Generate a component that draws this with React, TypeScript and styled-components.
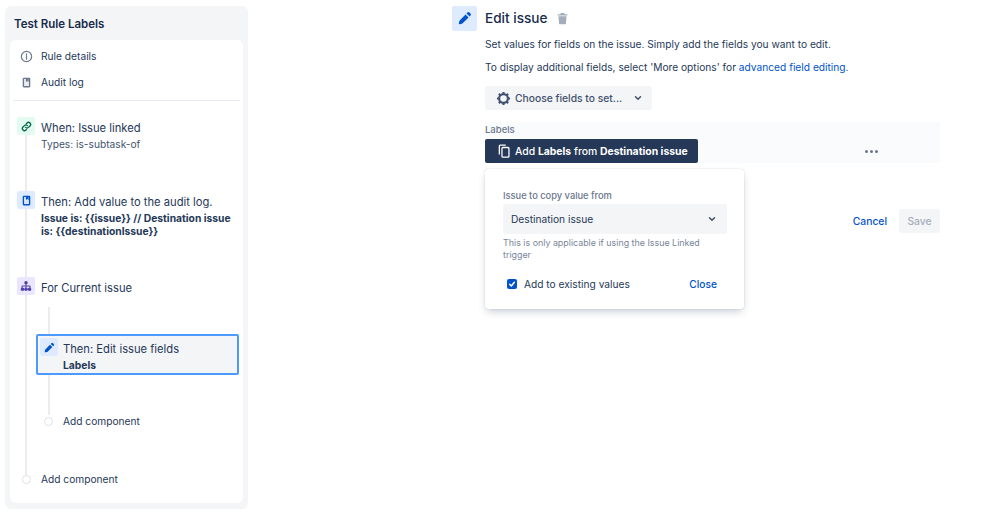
import React from "react";
import styled, { createGlobalStyle } from "styled-components";

const Global = createGlobalStyle`
  html, body { margin: 0; padding: 0; background: #fff; }
  body { font-family: Inter, "Liberation Sans", sans-serif; color: #172b4d; -webkit-font-smoothing: antialiased; }
  * { box-sizing: border-box; }
`;

const Page = styled.div`
  width: 999px;
  height: 518px;
  display: flex;
  overflow: hidden;
`;
const Sidebar = styled.aside`
  width: 243px;
  height: 503px;
  margin: 6px 0 0 5px;
  padding: 0 5px 6px;
  background: #f4f5f7;
  border-radius: 6px;
  display: flex;
  flex-direction: column;
`;
const RuleTitle = styled.h2`
  margin: 0;
  height: 34px;
  padding: 2px 0 0 4px;
  display: flex;
  align-items: center;
  font-size: 11.5px;
  font-weight: 600;
`;
const Card = styled.div`
  flex: 1;
  background: #fff;
  border-radius: 6px;
  padding: 3px 3px 0;
`;
const NavRow = styled.div`
  height: 26px;
  display: flex;
  align-items: center;
  gap: 8px;
  padding-left: 7px;
  font-size: 10.2px;
  color: #253858;
`;
const NavIcon = styled.svg`
  width: 13px;
  height: 13px;
  color: #6b778c;
  flex: none;
`;
const Divider = styled.hr`
  margin: 5px 0 0;
  border: 0;
  border-top: 1px solid #e8e9f0;
`;
const Timeline = styled.div`
  position: relative;
  margin-top: 16px;
  padding-left: 4px;
  &::before {
    content: "";
    position: absolute;
    left: 12px;
    top: 16px;
    height: 342px;
    width: 2px;
    background: #ebecf0;
  }
`;
const Step = styled.div<{ $h: number }>`
  position: relative;
  display: flex;
  gap: 6px;
  min-height: ${(p) => p.$h}px;
`;
const IconBox = styled.div<{ $bg: string; $fg: string; $size?: number }>`
  width: ${(p) => p.$size ?? 18}px;
  height: ${(p) => p.$size ?? 18}px;
  flex: none;
  border-radius: 2px;
  background: ${(p) => p.$bg};
  color: ${(p) => p.$fg};
  display: flex;
  align-items: center;
  justify-content: center;
`;
const StepBody = styled.div`
  min-width: 0;
`;
const StepTitle = styled.div`
  margin-top: 2px;
  height: 18px;
  line-height: 18px;
  font-size: 11.2px;
  color: #253858;
  white-space: nowrap;
`;
const StepSub = styled.div`
  margin-top: 1px;
  font-size: 10.2px;
  line-height: 13px;
  color: #42526e;
`;
const StepBold = styled.div`
  margin-top: 1px;
  font-size: 10.3px;
  line-height: 13px;
  font-weight: 700;
  color: #253858;
  width: 196px;
`;
const Nested = styled.div`
  position: relative;
  height: 175px;
  margin-left: 19px;
  padding-top: 37px;
  &::before {
    content: "";
    position: absolute;
    left: 12px;
    top: 10px;
    height: 108px;
    width: 2px;
    background: #ebecf0;
  }
`;
const Selected = styled.div`
  position: relative;
  width: 203px;
  height: 41px;
  display: flex;
  gap: 5px;
  padding: 2px;
  background: #f4f5f7;
  border: 2px solid #4c9aff;
  border-radius: 2px;
`;
const AddRow = styled.div<{ $mt: number; $pl: number }>`
  display: flex;
  align-items: center;
  height: 14px;
  margin-top: ${(p) => p.$mt}px;
  padding-left: ${(p) => p.$pl}px;
  gap: 10px;
  font-size: 10.2px;
  color: #253858;
  position: relative;
`;
const Dot = styled.span`
  width: 9px;
  height: 9px;
  flex: none;
  border-radius: 50%;
  background: #fff;
  border: 1.5px solid #dfe1e6;
`;

const Main = styled.main`
  width: 488px;
  margin-left: 204px;
  padding-top: 6px;
`;
const Heading = styled.div`
  display: flex;
  align-items: center;
  height: 24px;
`;
const HeadingTitle = styled.h1`
  margin: 0 8px 0 8px;
  font-size: 13.6px;
  font-weight: 500;
  color: #172b4d;
`;
const Content = styled.div`
  margin-left: 33px;
`;
const Para = styled.p`
  margin: 0;
  height: 24px;
  line-height: 24px;
  font-size: 10.2px;
  color: #253858;
  white-space: nowrap;
  &:first-child { margin-top: 1px; padding-top: 1px; }
`;
const TextLink = styled.a`
  color: #0052cc;
`;
const ChooseButton = styled.div`
  margin-top: 7px;
  width: 167px;
  height: 24px;
  padding-left: 11px;
  display: flex;
  align-items: center;
  gap: 4px;
  background: #f4f5f7;
  border-radius: 3px;
  font-size: 10.3px;
  font-weight: 500;
  color: #42526e;
  white-space: nowrap;
`;
const CaretSlot = styled.span`
  margin-left: 7px;
  display: flex;
`;
const FieldBlock = styled.div`
  position: relative;
  margin-top: 12px;
  height: 41px;
  background: #fafbfc;
`;
const FieldLabel = styled.div`
  height: 17px;
  line-height: 16px;
  font-size: 9.5px;
  font-weight: 500;
  color: #6b778c;
`;
const FieldRow = styled.div`
  display: flex;
  align-items: center;
  justify-content: space-between;
  padding-right: 62px;
`;
const DarkButton = styled.div`
  width: 213px;
  height: 24px;
  padding-left: 12px;
  display: flex;
  align-items: center;
  gap: 4px;
  background: #253858;
  border-radius: 2px;
  color: #fff;
  font-size: 10.4px;
  font-weight: 500;
  white-space: nowrap;
  b { font-weight: 700; }
`;
const More = styled.div`
  display: flex;
  gap: 2px;
  span { width: 3px; height: 3px; border-radius: 50%; background: #6b778c; }
`;
const Popup = styled.div`
  position: absolute;
  left: 0;
  top: 47px;
  width: 259px;
  height: 140px;
  padding: 20px 17px 0 18px;
  background: #fff;
  border-radius: 3px;
  box-shadow: 0 4px 8px -2px rgba(9, 30, 66, 0.25), 0 0 1px rgba(9, 30, 66, 0.31);
`;
const PopupLabel = styled.div`
  font-size: 9.3px;
  line-height: 14px;
  font-weight: 500;
  color: #6b778c;
`;
const SelectBox = styled.div`
  margin-top: 1px;
  height: 30px;
  padding: 0 10px 0 8px;
  display: flex;
  align-items: center;
  justify-content: space-between;
  background: #f4f5f7;
  border-radius: 3px;
  font-size: 10.2px;
  color: #253858;
`;
const SelectCaret = styled.span`
  display: flex;
  color: #42526e;
`;
const Help = styled.div`
  margin-top: 3px;
  width: 220px;
  font-size: 8.9px;
  line-height: 12px;
  color: #7a869a;
`;
const CheckRow = styled.div`
  margin-top: 17px;
  padding: 0 10px 0 4px;
  display: flex;
  align-items: center;
  font-size: 10.2px;
  color: #253858;
`;
const CheckBox = styled.span`
  width: 10px;
  height: 10px;
  margin-right: 7px;
  background: #0052cc;
  border-radius: 2px;
  display: flex;
  align-items: center;
  justify-content: center;
`;
const CloseLink = styled.span`
  margin-left: auto;
  font-weight: 500;
  color: #0052cc;
`;
const Actions = styled.div`
  margin-top: 46px;
  display: flex;
  align-items: center;
  justify-content: flex-end;
  gap: 12px;
  font-size: 10.3px;
  font-weight: 500;
`;
const Cancel = styled.span`
  color: #0052cc;
`;
const Save = styled.span`
  width: 41px;
  height: 24px;
  display: flex;
  align-items: center;
  justify-content: center;
  background: #f4f5f7;
  border-radius: 3px;
  color: #a5adba;
`;

const PageGlyph = ({ size = 13 }: { size?: number }) => (
  <svg width={size} height={size} viewBox="0 0 24 24" fill="none">
    <rect x="5" y="3" width="14" height="18" rx="2" fill="currentColor" />
    <rect x="7.500" y="5.500" width="9" height="13" fill="#fff" fillOpacity="0.85" />
    <path d="M11 5h5v6l-2.500-1.800L11 11z" fill="currentColor" />
  </svg>
);
const Pencil = ({ size = 12 }: { size?: number }) => (
  <svg width={size} height={size} viewBox="0 0 24 24" fill="currentColor">
    <path d="M16.200 2.600a2.400 2.400 0 0 1 3.400 0l1.800 1.800a2.400 2.400 0 0 1 0 3.400l-1.600 1.600-5.200-5.200zM12.900 5.900l5.200 5.200L8 21.200c-.4.4-.9.6-1.400.7l-3.700.7a1.200 1.200 0 0 1-1.400-1.400l.7-3.700c.1-.5.3-1 .7-1.400z" />
  </svg>
);
const Chevron = () => (
  <svg width="10" height="10" viewBox="0 0 24 24" fill="none" stroke="currentColor" strokeWidth="3.600" strokeLinecap="round" strokeLinejoin="round">
    <path d="M6 9l6 6 6-6" />
  </svg>
);

const auditText = "Issue is: {{issue}} // Destination issue is: {{destinationIssue}}";

export default function App() {
  return (
    <Page>
      <Global />
      <Sidebar>
        <RuleTitle>Test Rule Labels</RuleTitle>
        <Card>
          <NavRow>
            <NavIcon viewBox="0 0 24 24" fill="none" stroke="currentColor" strokeWidth="2.200">
              <circle cx="12" cy="12" r="9.500" />
              <path d="M12 11v6M12 7v1.600" strokeLinecap="round" />
            </NavIcon>
            Rule details
          </NavRow>
          <NavRow>
            <NavIcon as="span"><PageGlyph /></NavIcon>
            Audit log
          </NavRow>
          <Divider />
          <Timeline>
            <Step $h={74}>
              <IconBox $bg="#e3fcef" $fg="#006644">
                <svg width="11" height="11" viewBox="0 0 24 24" fill="none" stroke="currentColor" strokeWidth="2.800" strokeLinecap="round">
                  <path d="M10 14a4.500 4.500 0 0 0 6.400 0l3.200-3.200a4.500 4.500 0 0 0-6.400-6.400l-1.400 1.400" />
                  <path d="M14 10a4.500 4.500 0 0 0-6.400 0l-3.200 3.200a4.500 4.500 0 0 0 6.400 6.400l1.400-1.400" />
                </svg>
              </IconBox>
              <StepBody>
                <StepTitle>When: Issue linked</StepTitle>
                <StepSub>Types: is-subtask-of</StepSub>
              </StepBody>
            </Step>
            <Step $h={86}>
              <IconBox $bg="#deebff" $fg="#0052cc"><PageGlyph /></IconBox>
              <StepBody>
                <StepTitle>Then: Add value to the audit log.</StepTitle>
                <StepBold>{auditText}</StepBold>
              </StepBody>
            </Step>
            <Step $h={18}>
              <IconBox $bg="#eae6ff" $fg="#5243aa">
                <svg width="12" height="12" viewBox="0 0 24 24" fill="currentColor">
                  <circle cx="12" cy="5.500" r="3.500" />
                  <circle cx="5" cy="18.500" r="3.500" />
                  <circle cx="12" cy="18.500" r="3.500" />
                  <circle cx="19" cy="18.500" r="3.500" />
                  <path d="M11 8h2v3h6.500A1.500 1.500 0 0 1 21 12.500V16h-2v-3h-6v3h-2v-3H5v3H3v-3.500A1.500 1.500 0 0 1 4.500 11H11z" />
                </svg>
              </IconBox>
              <StepBody>
                <StepTitle>For Current issue</StepTitle>
              </StepBody>
            </Step>
            <Nested>
              <Selected>
                <IconBox $bg="#deebff" $fg="#0052cc"><Pencil size={11} /></IconBox>
                <StepBody>
                  <StepTitle>Then: Edit issue fields</StepTitle>
                  <StepBold>Labels</StepBold>
                </StepBody>
              </Selected>
              <AddRow $mt={39} $pl={8}><Dot />Add component</AddRow>
            </Nested>
            <AddRow $mt={0} $pl={5}><Dot />Add component</AddRow>
          </Timeline>
        </Card>
      </Sidebar>
      <Main>
        <Heading>
          <IconBox $bg="#deebff" $fg="#0052cc" $size={25}><Pencil size={14} /></IconBox>
          <HeadingTitle>Edit issue</HeadingTitle>
          <svg width="13" height="13" viewBox="0 0 24 24" fill="#a5adba">
            <path d="M9 2h6l1 2h5v2.500H3V4h5zM4.500 8h15l-1.200 13a2 2 0 0 1-2 1.800H7.700a2 2 0 0 1-2-1.800z" />
          </svg>
        </Heading>
        <Content>
          <Para>Set values for fields on the issue. Simply add the fields you want to edit.</Para>
          <Para>To display additional fields, select 'More options' for <TextLink>advanced field editing</TextLink>.</Para>
          <ChooseButton>
            <svg width="15" height="15" viewBox="0 0 24 24" fill="none" stroke="#42526e">
              <circle cx="12" cy="12" r="7" strokeWidth="3.400" />
              <path d="M12 1.500v4M12 18.500v4M1.500 12h4M18.500 12h4M4.600 4.600l2.800 2.800M16.600 16.600l2.800 2.800M4.600 19.400l2.800-2.800M16.600 7.400l2.800-2.800" strokeWidth="3.400" />
            </svg>
            Choose fields to set...
            <CaretSlot><Chevron /></CaretSlot>
          </ChooseButton>
          <FieldBlock>
            <FieldLabel>Labels</FieldLabel>
            <FieldRow>
              <DarkButton>
                <svg width="14" height="14" viewBox="0 0 24 24" fill="none" stroke="#fff" strokeWidth="2.200">
                  <rect x="8.500" y="6" width="12" height="16.500" rx="1.500" />
                  <path d="M4 18V3.500A1.500 1.500 0 0 1 5.500 2H15" />
                </svg>
                <span>Add <b>Labels</b> from <b>Destination issue</b></span>
              </DarkButton>
              <More><span /><span /><span /></More>
            </FieldRow>
            <Popup>
              <PopupLabel>Issue to copy value from</PopupLabel>
              <SelectBox>
                Destination issue
                <SelectCaret><Chevron /></SelectCaret>
              </SelectBox>
              <Help>This is only applicable if using the Issue Linked trigger</Help>
              <CheckRow>
                <CheckBox>
                  <svg width="8" height="8" viewBox="0 0 24 24" fill="none" stroke="#fff" strokeWidth="4.500" strokeLinecap="round" strokeLinejoin="round">
                    <path d="M5 13l5 5 9-11" />
                  </svg>
                </CheckBox>
                Add to existing values
                <CloseLink>Close</CloseLink>
              </CheckRow>
            </Popup>
          </FieldBlock>
          <Actions>
            <Cancel>Cancel</Cancel>
            <Save>Save</Save>
          </Actions>
        </Content>
      </Main>
    </Page>
  );
}
